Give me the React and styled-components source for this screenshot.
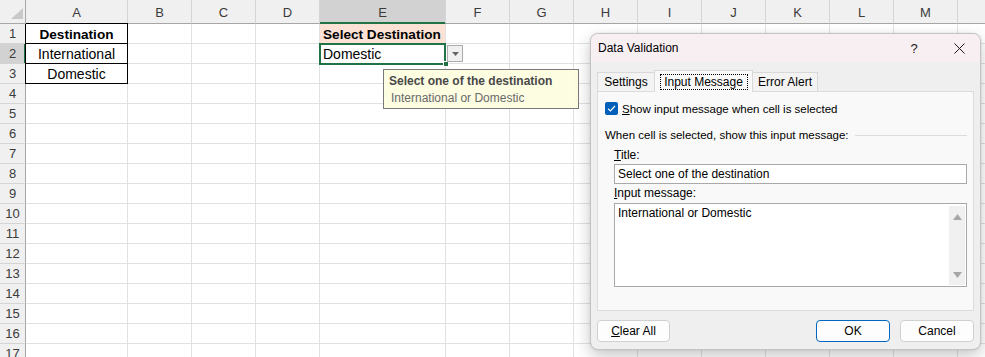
import React from 'react'
import styled, { createGlobalStyle } from 'styled-components'

const GlobalStyle = createGlobalStyle`
  html, body {
    margin: 0;
    padding: 0;
    background: #ffffff;
    overflow: hidden;
  }
  body {
    font-family: "Liberation Sans", Arial, sans-serif;
  }
  * { box-sizing: border-box; }
`

const GREEN = '#217346'

const COLUMNS = [
  ['A', 102], ['B', 64], ['C', 64], ['D', 64], ['E', 126], ['F', 64], ['G', 64],
  ['H', 64], ['I', 64], ['J', 64], ['K', 64], ['L', 64], ['M', 64], ['N', 64],
]

const ROWS = Array.from({ length: 17 }, (_, i) => i + 1)

const CELLS = {
  A1: { text: 'Destination', bold: true, align: 'center', boxed: true },
  A2: { text: 'International', align: 'center', boxed: true },
  A3: { text: 'Domestic', align: 'center', boxed: true },
  E1: { text: 'Select Destination', bold: true, fill: '#fbe2d5' },
  E2: { text: 'Domestic', active: true },
}

const Screen = styled.div`
  position: relative;
  width: 985px;
  height: 357px;
  overflow: hidden;
`

const Sheet = styled.div`
  display: grid;
  grid-template-columns: 26px ${COLUMNS.map(([, w]) => `${w}px`).join(' ')};
  grid-template-rows: 24px;
  grid-auto-rows: 20px;
`

const Corner = styled.div`
  background: #f0f0f0;
  border-right: 1px solid #a6a6a6;
  border-bottom: 1px solid #a6a6a6;
  display: flex;
  align-items: flex-end;
  justify-content: flex-end;
  padding: 0 2px 4px 0;
`

const ColHeader = styled.div`
  display: flex;
  align-items: center;
  justify-content: center;
  padding-top: 1px;
  font-size: 13px;
  color: #3b3b3b;
  background: ${(p) => (p.$selected ? '#d2d2d2' : '#f0f0f0')};
  border-right: 1px solid #d4d4d4;
  border-bottom: 1px solid ${(p) => (p.$selected ? GREEN : '#a6a6a6')};
  box-shadow: ${(p) => (p.$selected ? `inset 0 -1px 0 ${GREEN}` : 'none')};
`

const RowHeader = styled.div`
  display: flex;
  align-items: center;
  justify-content: center;
  font-size: 13px;
  color: #3b3b3b;
  background: ${(p) => (p.$selected ? '#d2d2d2' : '#f0f0f0')};
  border-bottom: 1px solid #d4d4d4;
  border-right: 1px solid ${(p) => (p.$selected ? GREEN : '#a6a6a6')};
  box-shadow: ${(p) => (p.$selected ? `inset -1px 0 0 ${GREEN}` : 'none')};
`

const Cell = styled.div`
  position: ${(p) => (p.$active ? 'relative' : 'static')};
  display: flex;
  align-items: center;
  justify-content: ${(p) => (p.$align === 'center' ? 'center' : 'flex-start')};
  padding: 1px 3px 0;
  font-size: ${(p) => (p.$bold ? 13.6 : 14)}px;
  font-weight: ${(p) => (p.$bold ? 700 : 400)};
  color: #000;
  white-space: nowrap;
  background: ${(p) => p.$fill || '#ffffff'};
  border-right: 1px solid ${(p) => (p.$boxed ? '#000' : '#e1e1e1')};
  border-bottom: 1px solid ${(p) => (p.$boxed ? '#000' : '#e1e1e1')};
  box-shadow: ${(p) => (p.$boxed ? '-1px 0 0 #000, 0 -1px 0 #000' : 'none')};
`

const Selection = styled.span`
  position: absolute;
  left: -1px;
  top: -1px;
  width: 127px;
  height: 22px;
  border: 2px solid ${GREEN};
  pointer-events: none;
`

const FillHandle = styled.span`
  position: absolute;
  right: -4px;
  bottom: -4px;
  width: 6px;
  height: 6px;
  background: ${GREEN};
  border: 1px solid #ffffff;
`

const DropButton = styled.span`
  position: absolute;
  left: 127px;
  top: 1px;
  width: 16px;
  height: 17px;
  background: #f0f0f0;
  border: 1px solid #ababab;
  display: flex;
  align-items: center;
  justify-content: center;
`

const Tooltip = styled.div`
  position: absolute;
  left: 383px;
  top: 69px;
  width: 196px;
  height: 40px;
  padding: 3px 4px 0 5px;
  background: #fdfde2;
  border: 1px solid #7a7a7a;
  font-size: 12px;
  line-height: 17px;
`

const TipTitle = styled.div`
  font-weight: 700;
  color: #484848;
`

const TipText = styled.div`
  color: #6a6a6a;
  padding-left: 2px;
`

/* dialog */

const Window = styled.div`
  position: absolute;
  left: 590px;
  top: 33px;
  width: 391px;
  height: 317px;
  background: #efefef;
  border: 1px solid #c4c4c4;
  border-radius: 8px;
  box-shadow: 0 6px 16px rgba(0, 0, 0, 0.22), 0 0 2px rgba(0, 0, 0, 0.12);
  overflow: hidden;
  display: flex;
  flex-direction: column;
  font-size: 12px;
  color: #000;
`

const TitleBar = styled.div`
  height: 28px;
  flex: none;
  display: flex;
  align-items: center;
  padding-left: 7px;
  background: #f8eff3;
`

const Title = styled.div`
  flex: 1;
  font-size: 12px;
`

const TitleButton = styled.div`
  width: ${(p) => p.$w}px;
  height: 28px;
  display: flex;
  align-items: center;
  justify-content: center;
  font-size: 13px;
  color: #1a1a1a;
`

const Body = styled.div`
  flex: 1;
  display: flex;
  flex-direction: column;
  padding: 8px 6px 0 6px;
`

const TabStrip = styled.div`
  position: relative;
  z-index: 1;
  height: 22px;
  margin-bottom: -1px;
  display: flex;
  align-items: flex-start;
`

const Tab = styled.div`
  width: ${(p) => p.$w}px;
  height: ${(p) => (p.$active ? 22 : 19)}px;
  margin-top: ${(p) => (p.$active ? 0 : 2)}px;
  margin-left: ${(p) => (p.$active ? -1 : 0)}px;
  margin-right: ${(p) => (p.$active ? -1 : 0)}px;
  position: relative;
  z-index: ${(p) => (p.$active ? 1 : 0)};
  background: ${(p) => (p.$active ? '#f9f9f9' : '#f3f3f3')};
  border: 1px solid #d9d9d9;
  border-bottom: none;
  display: flex;
  align-items: ${(p) => (p.$active ? 'flex-start' : 'center')};
  justify-content: center;
  padding-top: ${(p) => (p.$active ? 3 : 0)}px;
  white-space: nowrap;
`

const FocusText = styled.span`
  display: block;
  width: 88px;
  height: 16px;
  line-height: 14px;
  text-align: center;
  border: 1px dotted #000;
`

const Panel = styled.div`
  height: 220px;
  flex: none;
  background: #f9f9f9;
  border: 1px solid #dcdcdc;
  display: flex;
  flex-direction: column;
  padding: 10px 6px 0 7px;
`

const CheckRow = styled.div`
  display: flex;
  align-items: center;
  gap: 4px;
  height: 13px;
  font-size: 11.5px;
`

const CheckBox = styled.span`
  width: 13px;
  height: 13px;
  border-radius: 2px;
  background: #005fb8;
  display: flex;
  align-items: center;
  justify-content: center;
`

const GroupRow = styled.div`
  margin-top: 12px;
  height: 16px;
  display: flex;
  align-items: center;
  gap: 6px;
  white-space: nowrap;
  font-size: 11.5px;
`

const GroupLine = styled.span`
  flex: 1;
  height: 1px;
  background: #dcdcdc;
`

const Fields = styled.div`
  padding-left: 9px;
  display: flex;
  flex-direction: column;
`

const FieldLabel = styled.div`
  height: 16px;
  line-height: 16px;
  margin-top: ${(p) => p.$gap}px;
`

const TextBox = styled.div`
  margin-top: ${(p) => p.$gap}px;
  height: ${(p) => p.$h}px;
  background: #ffffff;
  border: 1px solid #a9a9a9;
  display: flex;
  align-items: flex-start;
`

const BoxText = styled.div`
  flex: 1;
  padding: ${(p) => (p.$multi ? '2px 3px' : '2px 3px 0')};
  line-height: 15px;
`

const ScrollBar = styled.div`
  width: 16px;
  align-self: stretch;
  margin: 2px 1px 1px 0;
  background: #f0f0f0;
  display: flex;
  flex-direction: column;
  justify-content: space-between;
  align-items: center;
  padding: 8px 0 7px;
`

const Footer = styled.div`
  display: flex;
  align-items: center;
  padding-top: 9px;
`

const Button = styled.div`
  width: ${(p) => p.$w}px;
  height: 22px;
  margin-left: ${(p) => p.$ml || 0}px;
  background: #fdfdfd;
  border: 1px solid ${(p) => (p.$primary ? '#0067c0' : '#d0d0d0')};
  border-radius: 4px;
  display: flex;
  align-items: center;
  justify-content: center;
`

const Spacer = styled.span`
  flex: 1;
`

const Arrow = ({ down }) => (
  <svg width="9" height="6" viewBox="0 0 9 6">
    <polygon points={down ? '0,0 9,0 4.5,6' : '0,6 9,6 4.5,0'} fill="#a6a6a6" />
  </svg>
)

const SpreadSheet = () => (
  <Sheet>
    <Corner>
      <svg width="12" height="11" viewBox="0 0 12 11">
        <polygon points="0,11 12,11 12,0" fill="#c9c9c9" />
      </svg>
    </Corner>
    {COLUMNS.map(([name]) => (
      <ColHeader key={name} $selected={name === 'E'}>{name}</ColHeader>
    ))}
    {ROWS.map((row) => (
      <React.Fragment key={row}>
        <RowHeader $selected={row === 2}>{row}</RowHeader>
        {COLUMNS.map(([name]) => {
          const c = CELLS[`${name}${row}`] || {}
          return (
            <Cell
              key={name}
              $bold={c.bold}
              $align={c.align}
              $boxed={c.boxed}
              $fill={c.fill}
              $active={c.active}
            >
              {c.text}
              {c.active && (
                <>
                  <Selection />
                  <FillHandle />
                  <DropButton>
                    <svg width="7" height="4" viewBox="0 0 7 4">
                      <polygon points="0,0 7,0 3.5,4" fill="#666" />
                    </svg>
                  </DropButton>
                </>
              )}
            </Cell>
          )
        })}
      </React.Fragment>
    ))}
  </Sheet>
)

const DataValidation = () => (
  <Window>
    <TitleBar>
      <Title>Data Validation</Title>
      <TitleButton $w={48}>?</TitleButton>
      <TitleButton $w={42}>
        <svg width="11" height="11" viewBox="0 0 11 11">
          <path d="M0.5 0.5 L10.5 10.5 M10.5 0.5 L0.5 10.5" stroke="#1a1a1a" strokeWidth="1" />
        </svg>
      </TitleButton>
    </TitleBar>
    <Body>
      <TabStrip>
        <Tab $w={58}>Settings</Tab>
        <Tab $w={99} $active>
          <FocusText>Input Message</FocusText>
        </Tab>
        <Tab $w={66}>Error Alert</Tab>
      </TabStrip>
      <Panel>
        <CheckRow>
          <CheckBox>
            <svg width="9" height="7" viewBox="0 0 9 7">
              <path d="M1 3.6 L3.4 6 L8 1" stroke="#fff" strokeWidth="1.2" fill="none" />
            </svg>
          </CheckBox>
          <span><u>S</u>how input message when cell is selected</span>
        </CheckRow>
        <GroupRow>
          <span>When cell is selected, show this input message:</span>
          <GroupLine />
        </GroupRow>
        <Fields>
          <FieldLabel $gap={4}><u>T</u>itle:</FieldLabel>
          <TextBox $gap={1} $h={20}>
            <BoxText>Select one of the destination</BoxText>
          </TextBox>
          <FieldLabel $gap={1}><u>I</u>nput message:</FieldLabel>
          <TextBox $gap={2} $h={84}>
            <BoxText $multi>International or Domestic</BoxText>
            <ScrollBar>
              <Arrow />
              <Arrow down />
            </ScrollBar>
          </TextBox>
        </Fields>
      </Panel>
      <Footer>
        <Button $w={73}><u>C</u>lear All</Button>
        <Spacer />
        <Button $w={74} $primary>OK</Button>
        <Button $w={74} $ml={10}>Cancel</Button>
      </Footer>
    </Body>
  </Window>
)

const App = () => (
  <Screen>
    <GlobalStyle />
    <SpreadSheet />
    <Tooltip>
      <TipTitle>Select one of the destination</TipTitle>
      <TipText>International or Domestic</TipText>
    </Tooltip>
    <DataValidation />
  </Screen>
)

export default App
